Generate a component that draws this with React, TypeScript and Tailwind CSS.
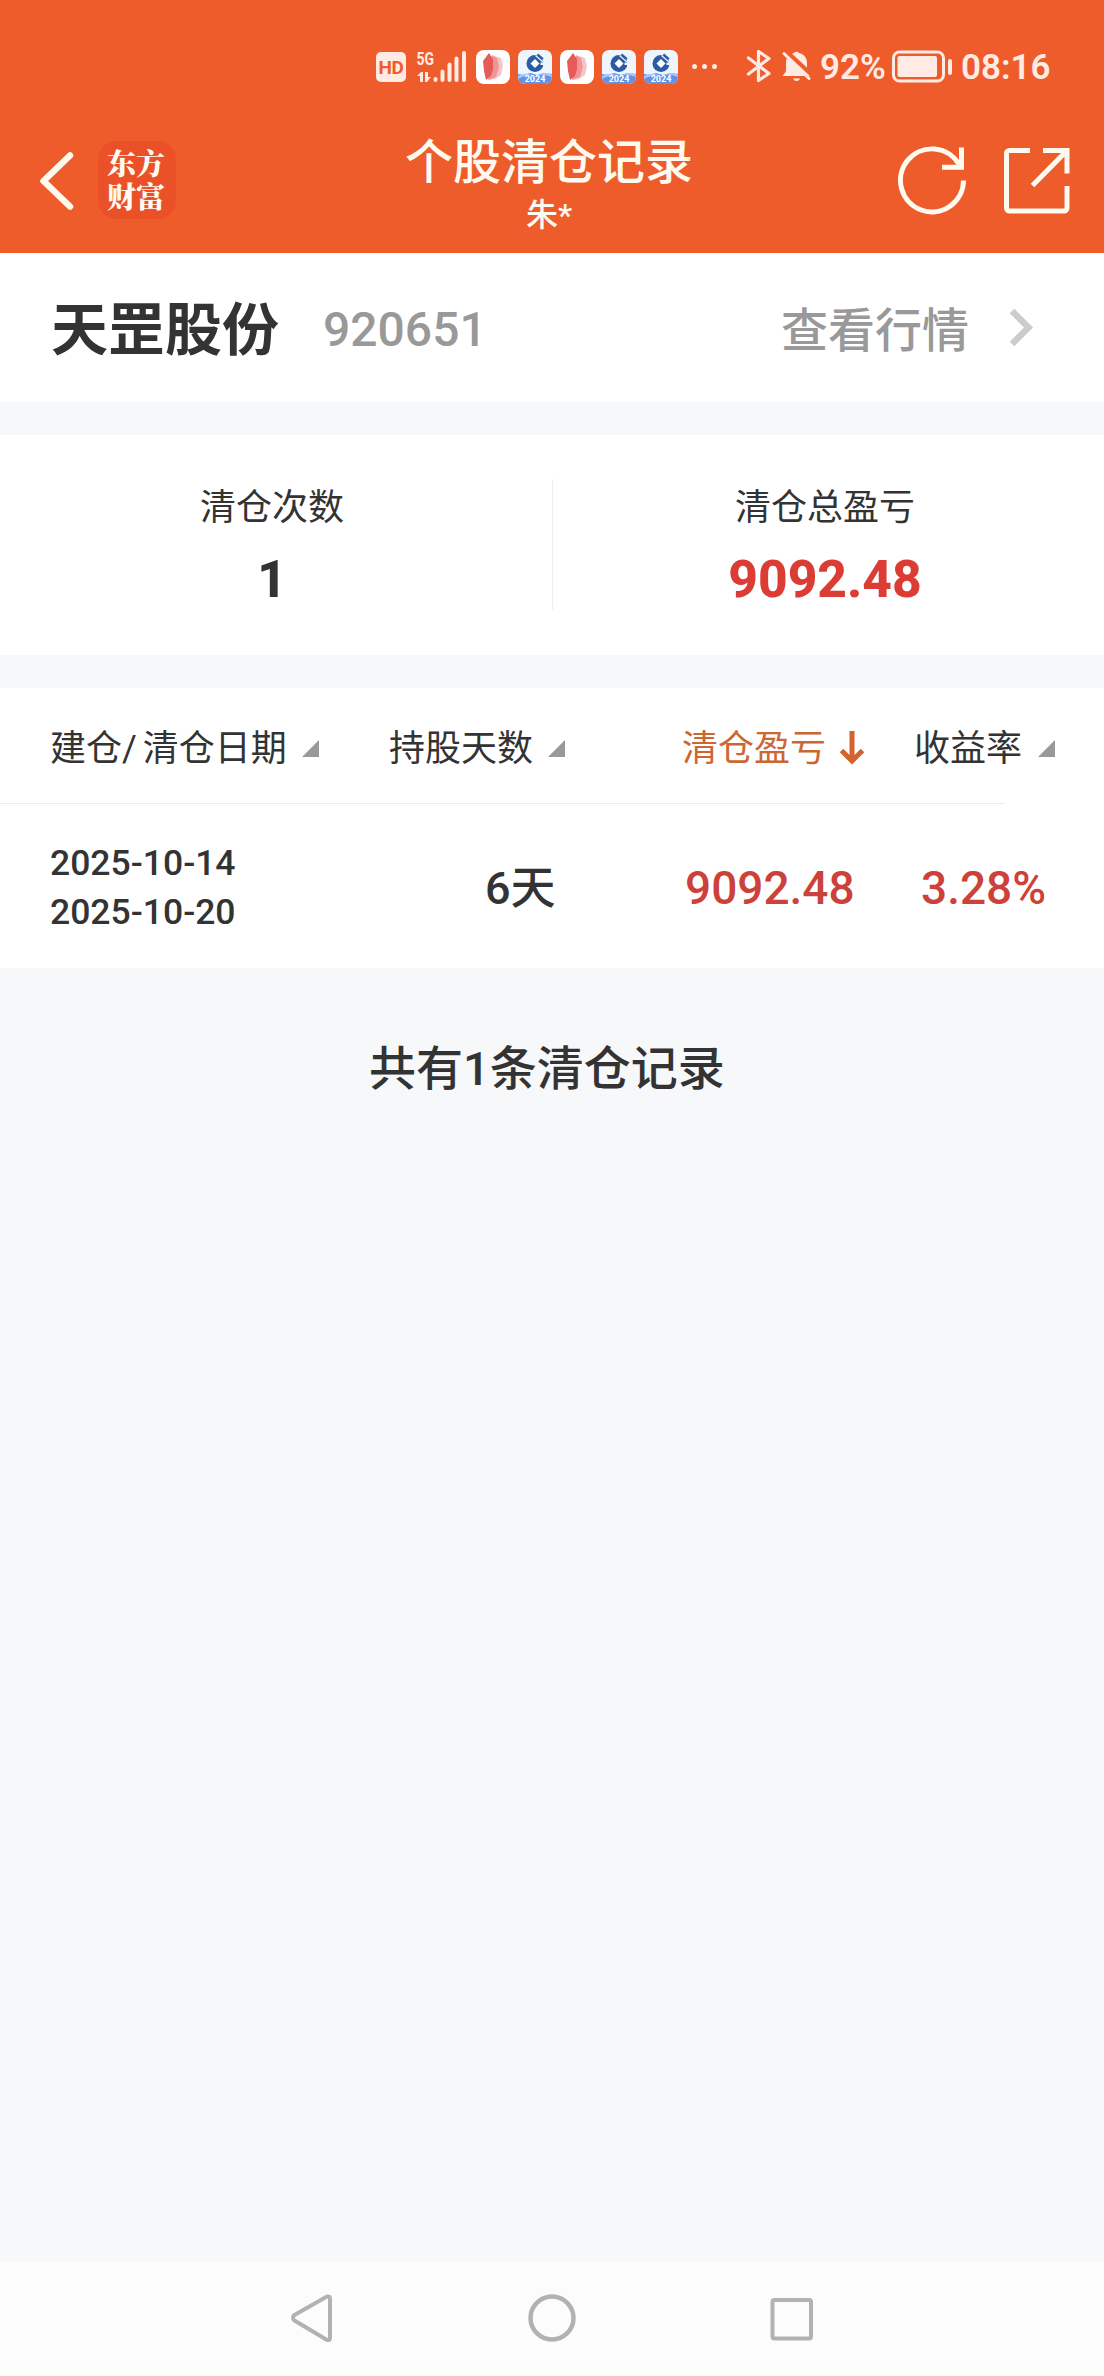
import type { ReactNode } from 'react';

function Feather() {
  return (
    <svg className="h-[34px] w-[34px] shrink-0" viewBox="0 0 34 34">
      <rect width="34" height="34" rx="8" fill="#fff" />
      <path d="M19 6l6 2 2 8-2 9-6 4-7 1z" fill="#f6c6c6" />
      <path d="M16 5l5 3 2 9-3 10-8 3z" fill="#f09596" />
      <path d="M13 3l4 6v10l-2 7-5 4-2-9-1-10z" fill="#e65a5a" />
    </svg>
  );
}

function BankIcon() {
  return (
    <svg className="h-[34px] w-[34px] shrink-0" viewBox="0 0 34 34">
      <defs>
        <clipPath id="tile"><rect width="34" height="34" rx="7" /></clipPath>
      </defs>
      <g clipPath="url(#tile)">
        <rect width="34" height="34" fill="#eef5fd" />
        <path d="M0 24l6 1 6-2 7 2 7-2 8 1v10H0z" fill="#5f93e6" />
        <path d="M0 26q8-4 14-1-7 0-14 4zM20 25q8-4 14 0v2q-7-3-14-2z" fill="#a9c8f5" />
        <circle cx="17" cy="13.500" r="8.500" fill="#2c5ba5" />
        <path d="M17 9l4.500 4.500L17 18l-4.500-4.500z" fill="#fff" />
        <path d="M22.500 12.500h5v2.500h-5z" fill="#eef5fd" />
        <path d="M17.500 5.500l7.500 6.500" stroke="#eef5fd" strokeWidth="1.200" />
        <path d="M19.500 4.200l5.500 4.800" stroke="#2c5ba5" strokeWidth="1.800" />
        <text x="17" y="31.500" textAnchor="middle" fontSize="9" fontWeight="700" fill="#fff" fontFamily="Roboto, sans-serif">2024</text>
      </g>
    </svg>
  );
}

function StatusBar() {
  return (
    <div className="flex h-[100px] items-start pt-[50px] pl-[376px] text-[#ffebe3]">
      <div className="mt-[2px] flex h-[30px] w-[30px] shrink-0 items-center justify-center rounded-[5px] bg-[#ffebe3] text-[19px] font-bold leading-none tracking-[-0.5px] text-[#ee5c2b]">
        HD
      </div>
      <svg className="ml-[10px] h-[34px] w-[52px] shrink-0 overflow-visible" viewBox="0 0 52 34" fill="currentColor">
        <text x="0.500" y="14.500" fontSize="18" fontWeight="700" fontFamily="Roboto, sans-serif" textLength="17.500" lengthAdjust="spacingAndGlyphs">5G</text>
        <path d="M1 26l4-4h2v10H4v-6zM9 22h3v5h3l-4 5H9z" />
        <rect x="17.500" y="27" width="4" height="5" rx="2" />
        <rect x="24.500" y="19.500" width="4" height="12.500" rx="2" />
        <rect x="31.500" y="12.500" width="4" height="19.500" rx="2" />
        <rect x="38.500" y="6.500" width="4" height="25.500" rx="2" />
        <rect x="46" y="1" width="4" height="31" rx="2" />
      </svg>
      <div className="ml-[8px] flex gap-[8px]">
        <Feather />
        <BankIcon />
        <Feather />
        <BankIcon />
        <BankIcon />
      </div>
      <svg className="ml-[12px] h-[34px] w-[30px] shrink-0" viewBox="0 0 30 34" fill="currentColor">
        <circle cx="4.500" cy="16.500" r="2.500" />
        <circle cx="14.500" cy="16.500" r="2.500" />
        <circle cx="24.500" cy="16.500" r="2.500" />
      </svg>
      <svg className="ml-[26px] h-[34px] w-[26px] shrink-0" viewBox="0 0 26 34" fill="none" stroke="currentColor" strokeWidth="3.200" strokeLinejoin="round" strokeLinecap="round">
        <path d="M2.500 8L23 23.500l-10.500 7V1.500L23 8.500 2.500 24" />
      </svg>
      <svg className="ml-[10px] h-[34px] w-[30px] shrink-0" viewBox="0 0 30 34">
        <path d="M12 3a3 3 0 0 1 5 0c5 1 8 5 8 10v8l3 5H1c0-2 3-3 3-6v-8C4 7 8 4 12 3z" fill="currentColor" />
        <path d="M11 28.500h7q-1 2.500-3.500 2.500T11 28.500z" fill="currentColor" />
        <path d="M2 -1L31 26" stroke="#ee5c2b" strokeWidth="4" />
        <path d="M2 3.500L27 28.500" stroke="currentColor" strokeWidth="3" strokeLinecap="round" />
      </svg>
      <span className="mt-px ml-[8px] w-[72px] text-[35px] font-semibold leading-[34px]">92%</span>
      <svg className="h-[34px] w-[62px] shrink-0" viewBox="0 0 62 34">
        <rect x="1.500" y="2" width="50" height="29" rx="6" fill="none" stroke="currentColor" strokeWidth="3" />
        <rect x="5.500" y="6" width="39.500" height="21" rx="2" fill="currentColor" />
        <rect x="56" y="9" width="4" height="16" rx="2" fill="currentColor" />
      </svg>
      <span className="mt-px ml-[7px] text-[35px] font-semibold leading-[34px]">08:16</span>
    </div>
  );
}

function TitleBar() {
  return (
    <div className="flex h-[153px] items-start text-[#fffaf0]">
      <svg className="mt-[50px] ml-[38px] h-[62px] w-[38px]" viewBox="0 0 38 62" fill="none" stroke="currentColor" strokeWidth="6.500" strokeLinejoin="round" strokeLinecap="round">
        <path d="M32 5.500L5.500 31 32 56.500" />
      </svg>
      <div className="mt-[41px] ml-[22px] flex h-[78px] w-[78px] justify-center rounded-[18px] bg-[#ea5128] pt-[5px]">
        <span className="w-[60px] font-['Noto_Serif_CJK_SC','Noto_Sans_CJK_SC',serif] text-[29px] font-black leading-[33px] whitespace-normal">东方财富</span>
      </div>
      <div className="ml-[223px] flex w-[300px] flex-col items-center pt-[39px]">
        <h1 className="text-[48px] font-medium leading-[48px]">个股清仓记录</h1>
        <p className="mt-[12px] text-[32px] font-medium leading-[32px]">朱*</p>
      </div>
      <svg className="mt-[44px] ml-[199px] h-[72px] w-[72px]" viewBox="0 0 72 72" fill="none" stroke="currentColor" strokeWidth="5">
        <path d="M65.500 36.500A31.500 31.500 0 1 1 61.200 20.500" />
        <path d="M44 23.200H65.500M63.500 3.500V25.500" />
      </svg>
      <svg className="mt-[44px] ml-[31px] h-[72px] w-[72px]" viewBox="0 0 72 72" fill="none" stroke="currentColor" strokeWidth="5">
        <path d="M29 6.500H8.500a3 3 0 0 0-3 3V64a3 3 0 0 0 3 3H63a3 3 0 0 0 3-3V42" />
        <path d="M42 6.500H66V29.500M66 6.500L31.500 41.500" />
      </svg>
    </div>
  );
}

function SortMark() {
  return (
    <svg className="h-[17px] w-[17px] shrink-0" viewBox="0 0 17 17">
      <path d="M17 0V17H0z" fill="#999" />
    </svg>
  );
}

function Stat({ label, children }: { label: string; children: ReactNode }) {
  return (
    <div className="flex flex-1 flex-col items-center">
      <span className="text-[36px] font-normal leading-[36px]">{label}</span>
      {children}
    </div>
  );
}

export default function App() {
  return (
    <div className="flex h-[2376px] w-[1104px] flex-col bg-[#f7f8fa] font-[Roboto,'Noto_Sans_CJK_SC',sans-serif] text-[#333] whitespace-nowrap">
      <header className="h-[253px] bg-[#ee5c2b]">
        <StatusBar />
        <TitleBar />
      </header>

      <section className="flex h-[149px] items-center bg-white pl-[51px]">
        <span className="w-[272px] pt-[6px] text-[57px] font-bold leading-[57px]">天罡股份</span>
        <span className="w-[458px] pt-[5px] text-[48px] font-medium leading-[48px] text-[#999]">920651</span>
        <span className="w-[228px] pt-[5px] text-[47px] font-medium leading-[47px] text-[#999]">查看行情</span>
        <svg className="h-[38px] w-[26px]" viewBox="0 0 26 38" fill="none" stroke="#ccc" strokeWidth="6.500">
          <path d="M3 2L19.500 18.500 3 35" />
        </svg>
      </section>

      <section className="mt-[33px] flex h-[220px] bg-white pt-[44px]">
        <div className="flex w-[552px] pt-[11px] pr-[8px]">
          <Stat label="清仓次数">
            <strong className="mt-[28px] text-[51px] font-extrabold leading-[51px]">1</strong>
          </Stat>
        </div>
        <div className="h-[131px] w-px bg-[#eee]" />
        <div className="flex w-[544px] pt-[11px]">
          <Stat label="清仓总盈亏">
            <strong className="mt-[28px] text-[51.500px] font-extrabold leading-[51px] text-[#db3c34]">9092.48</strong>
          </Stat>
        </div>
      </section>

      <section className="mt-[33px] h-[280px] bg-white">
        <div className="flex h-[115px] items-center pt-[6px] pl-[50px] text-[36px] font-normal leading-[36px]">
          <div className="flex w-[339px] items-center">
            <span className="w-[252px] [word-spacing:-3px]">建仓/ 清仓日期</span>
            <SortMark />
          </div>
          <div className="flex w-[293px] items-center">
            <span className="w-[159px]">持股天数</span>
            <SortMark />
          </div>
          <div className="flex w-[232px] items-center text-[#cc6633]">
            <span className="w-[157px]">清仓盈亏</span>
            <svg className="h-[36px] w-[26px]" viewBox="0 0 26 36" fill="none" stroke="#d4622c" strokeWidth="5">
              <path d="M13 -1V30M2.500 19.500L13 30 23.500 19.500" />
            </svg>
          </div>
          <div className="flex items-center">
            <span className="w-[124px]">收益率</span>
            <SortMark />
          </div>
        </div>
        <div className="h-px w-[1005px] bg-[#ececec]" />
        <div className="flex h-[164px] items-center pt-[4px] pl-[50px] text-[45px] font-medium leading-[49px]">
          <div className="w-[435px] text-[35.500px]">
            <p>2025-10-14</p>
            <p>2025-10-20</p>
          </div>
          <span className="w-[200px]">6天</span>
          <span className="w-[236px] text-[46px] text-[#cc423a]">9092.48</span>
          <span className="text-[46px] text-[#cc423a]">3.28%</span>
        </div>
      </section>

      <p className="mt-[75px] pl-[369px] text-[47px] font-medium leading-[52px]">共有1条清仓记录</p>

      <nav className="mt-auto flex h-[115px] items-start bg-[#fcfcfc] pt-[30px] pl-[288px]">
        <svg className="h-[56px] w-[48px]" viewBox="0 0 48 56" fill="none" stroke="#b2b2b2" strokeWidth="4" strokeLinejoin="round">
          <path d="M5 26.500Q5 25 6.500 24L39 5.500q3-.5 3 2V47q0 2.500-3 2L6.500 29.500Q5 28.500 5 26.500z" />
        </svg>
        <svg className="ml-[188px] h-[56px] w-[56px]" viewBox="0 0 56 56" fill="none" stroke="#b2b2b2" strokeWidth="4.500">
          <circle cx="28" cy="27" r="21.500" />
        </svg>
        <svg className="ml-[184px] h-[56px] w-[56px]" viewBox="0 0 56 56" fill="none" stroke="#b2b2b2" strokeWidth="4">
          <rect x="8.500" y="9" width="38.500" height="38.500" rx="2" />
        </svg>
      </nav>
    </div>
  );
}
